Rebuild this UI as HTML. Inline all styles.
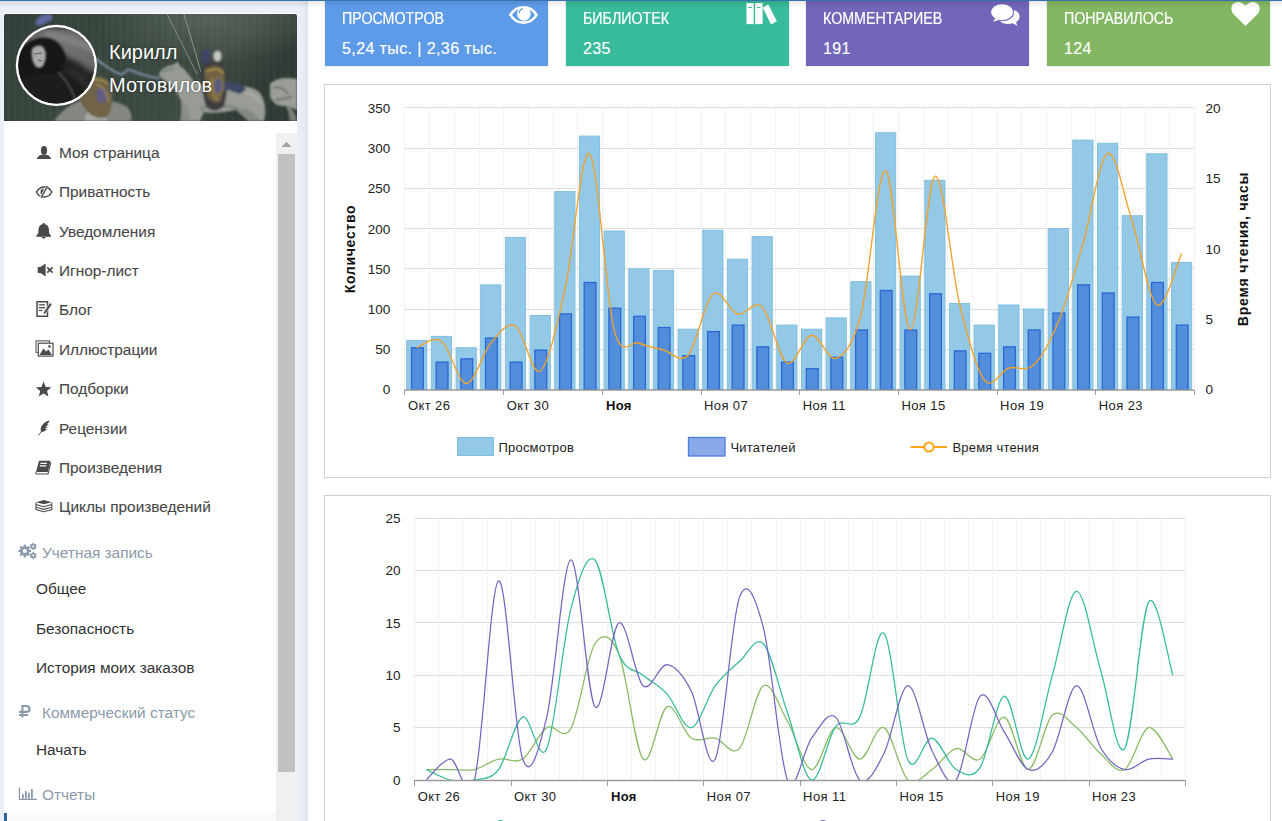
<!DOCTYPE html>
<html><head><meta charset="utf-8">
<style>
*{margin:0;padding:0;box-sizing:border-box}
html,body{width:1282px;height:821px;overflow:hidden;background:#fff;font-family:"Liberation Sans",sans-serif}
.a{position:absolute;white-space:nowrap}
#topline{position:absolute;left:0;top:0;width:1282px;height:1px;background:#3473ab;z-index:10}
#leftbg{position:absolute;left:0;top:0;width:308px;height:821px;background:#ebeff8}
#leftshadow{position:absolute;left:297px;top:0;width:11px;height:821px;background:linear-gradient(to right,#ebeff8 0%,#e7ebf4 60%,#dfe4ed 100%)}
#side{position:absolute;left:4px;top:13px;width:293px;height:808px;background:#fff;border-radius:4px 4px 0 0}
#hdr{position:absolute;left:4px;top:14px;width:293px;height:107px;border-radius:3px 3px 0 0;overflow:hidden;background:#36443b}
#sb{position:absolute;left:276px;top:133px;width:21px;height:688px;background:#f0f0f0}
#thumb{position:absolute;left:278px;top:154px;width:17px;height:618px;background:#c1c1c1}
.mi{position:absolute;left:59px;font-size:15.4px;color:#474747;line-height:20px;-webkit-text-stroke:0.1px #474747}
.si{position:absolute;left:36px;font-size:15.4px;color:#333;line-height:20px}
.sh{position:absolute;left:42px;font-size:15.4px;color:#8b9aab;line-height:20px}
.ic{position:absolute}
.card{position:absolute;top:1px;height:65px;color:#fff;box-shadow:0 0 1px rgba(0,0,0,.35)}
.card .t{position:absolute;left:17px;top:9px;-webkit-text-stroke:0.2px #fff;font-size:16px;line-height:18px;transform-origin:0 0;transform:scaleX(0.89)}
.card .v{position:absolute;left:17px;top:38px;-webkit-text-stroke:0.15px #fff;font-size:16px;line-height:20px;letter-spacing:0.4px}
.panel{position:absolute;left:324px;width:947px;border:1px solid #cfcfcf;background:#fff}
svg text{font-family:"Liberation Sans",sans-serif}
</style></head>
<body>
<div id="leftbg"></div>
<div id="leftshadow"></div>
<div id="side"></div>
<div id="hdr">
<svg width="293" height="107" viewBox="0 0 293 107">
<defs>
<linearGradient id="hg" x1="0" y1="0" x2="1" y2="0.3">
<stop offset="0" stop-color="#33413a"/><stop offset="0.45" stop-color="#3a4840"/><stop offset="0.8" stop-color="#3f4c44"/><stop offset="1" stop-color="#303c35"/>
</linearGradient>
<radialGradient id="hl" cx="0.7" cy="0.05" r="0.4">
<stop offset="0" stop-color="#6a756d" stop-opacity="0.55"/><stop offset="1" stop-color="#6a756d" stop-opacity="0"/>
</radialGradient>
<radialGradient id="avg" cx="0.6" cy="0.3" r="0.75">
<stop offset="0" stop-color="#7a7a7a"/><stop offset="0.45" stop-color="#3c3c3c"/><stop offset="1" stop-color="#161616"/>
</radialGradient>
<filter id="b1" x="-20%" y="-20%" width="140%" height="140%"><feGaussianBlur stdDeviation="1.2"/></filter>
<filter id="b2" x="-20%" y="-20%" width="140%" height="140%"><feGaussianBlur stdDeviation="2.5"/></filter>
<clipPath id="av"><circle cx="52.4" cy="51.4" r="38.1"/></clipPath>
<pattern id="streak" width="7" height="107" patternUnits="userSpaceOnUse">
<rect x="0" y="0" width="2" height="107" fill="#000" opacity="0.035"/><rect x="4" y="0" width="1" height="107" fill="#fff" opacity="0.02"/>
</pattern>
</defs>
<rect width="293" height="107" fill="url(#hg)"/>
<rect width="293" height="107" fill="url(#hl)"/>
<rect width="293" height="107" fill="url(#streak)"/>
<!-- lances -->
<line x1="163" y1="0" x2="193" y2="60" stroke="#8e948d" stroke-width="0.9"/>
<line x1="180" y1="0" x2="197" y2="58" stroke="#979c95" stroke-width="0.9"/>
<!-- ribbon -->
<path d="M90,44 C100,50 108,58 116,60 C122,62 120,54 126,56 C136,60 146,64 156,64" stroke="#8795b5" stroke-width="2.2" fill="none" filter="url(#b1)" opacity="0.9"/>
<!-- flag top -->
<path d="M31,10 C33,2 40,-1 47,0 L49,4 C46,8 40,10 35,12 Z" fill="#5b67a0" filter="url(#b1)"/>
<!-- horse under avatar -->
<g filter="url(#b1)">
<path d="M50,107 C56,98 66,90 78,86 C92,84 110,86 122,92 C128,98 128,104 127,107 Z" fill="#858882"/>
<path d="M84,96 C90,94 100,98 104,107 L80,107 Z" fill="#a6a9a4"/>
<path d="M72,70 C80,62 96,60 104,66 C110,74 110,92 104,102 C98,106 88,104 82,96 C76,88 72,80 72,70 Z" fill="#6f6446"/>
<path d="M76,70 C84,64 98,64 104,70" stroke="#a8924e" stroke-width="1.6" fill="none"/>
<ellipse cx="98" cy="81" rx="5.5" ry="8" fill="#5e5c80"/>
<path d="M92,70 C98,72 104,78 104,88" stroke="#b09a52" stroke-width="1.2" fill="none"/>
</g>
<!-- main horse -->
<g filter="url(#b1)">
<path d="M155,60 C156,56 162,52 168,51 L174,48 L176,52 C182,56 186,62 190,68 C200,72 214,70 230,72 C244,72 254,74 258,82 C262,90 262,100 260,107 L244,107 C240,100 236,96 232,96 C222,98 210,100 200,98 L196,107 L176,107 C178,98 178,90 176,84 C172,76 166,70 160,66 C157,64 155,62 155,60 Z" fill="#989b96"/>
<path d="M190,70 C200,76 212,78 226,76 C240,76 250,80 256,88" stroke="#b4b7b1" stroke-width="3" fill="none" opacity="0.6"/>
<path d="M196,96 C204,90 222,90 236,96" stroke="#70746e" stroke-width="3" fill="none" opacity="0.6"/>
<path d="M232,96 C240,92 250,96 256,107 L244,107 Z" fill="#858983"/>
<path d="M176,84 C182,88 186,96 186,107 L176,107 C178,98 178,90 176,84 Z" fill="#8a8e88"/>
<path d="M158,58 L170,54" stroke="#555a55" stroke-width="1" fill="none"/>
<path d="M197,38 C200,34 204,34 206,38 L206,50 L198,50 Z" fill="#3f4466"/>
<path d="M198,52 C204,46 216,44 220,52 C224,62 224,80 220,92 C214,98 206,98 202,92 C198,80 196,64 198,52 Z" fill="#3e3c40"/>
<path d="M200,56 C206,50 216,50 220,56 C222,66 220,80 216,88 C210,90 204,86 202,78 Z" fill="#6e6040"/>
<path d="M202,58 C208,54 216,54 219,60" stroke="#b49c56" stroke-width="1.5" fill="none"/>
<path d="M208,64 C206,72 208,82 214,86" stroke="#a89050" stroke-width="1.2" fill="none"/>
<ellipse cx="214" cy="72" rx="5" ry="8.5" fill="#5c5a7c" stroke="#9c8a4c" stroke-width="1"/>
<ellipse cx="213.5" cy="42" rx="4.2" ry="5.5" fill="#c4c6bf"/>
<path d="M220,68 C230,68 240,70 242,76 L236,80 C230,78 224,76 220,76 Z" fill="#3c4a66"/>
</g>
<!-- right horse -->
<g filter="url(#b1)">
<path d="M266,70 C272,64 282,63 293,65 L293,96 C288,94 284,92 280,92 C272,92 268,88 266,82 Z" fill="#9a9d98"/>
<path d="M284,92 C288,94 292,100 293,107 L286,107 C285,100 284,96 282,93 Z" fill="#7d817b"/>
<path d="M270,74 C274,72 280,74 284,80 M272,86 L288,83" stroke="#3d3f3c" stroke-width="1.1" fill="none"/>
</g>
<!-- avatar -->
<circle cx="52.4" cy="51.4" r="40.6" fill="#fff"/>
<g clip-path="url(#av)">
<rect x="10" y="10" width="85" height="85" fill="#242424"/>
<path d="M14,14 L95,14 L95,62 C86,52 76,44 62,40 C48,36 30,38 14,44 Z" fill="#6a6a6a" filter="url(#b2)"/>
<path d="M40,16 C56,18 74,22 90,34 L90,40 C74,32 56,28 40,24 Z" fill="#8c8c8c" opacity="0.7" filter="url(#b2)"/>
<path d="M60,32 C70,36 80,42 88,52 L88,60 C80,52 70,46 58,42 Z" fill="#7a7a7a" opacity="0.6" filter="url(#b2)"/>
<path d="M12,44 C16,30 30,22 44,24 C54,26 60,34 62,44 C60,54 54,62 50,70 L46,95 L12,95 Z" fill="#161616" filter="url(#b1)"/>
<path d="M28,35 C31,31 37,30 40,34 C43,39 42,47 39,52 C36,55 32,54 30,50 C28,46 27,40 28,35 Z" fill="#a9a9a9" filter="url(#b1)"/>
<path d="M30,40 L38,39 M34,46 L38,47" stroke="#444" stroke-width="0.8"/>
<path d="M14,66 C28,58 48,56 66,62 C80,68 90,80 94,95 L12,95 Z" fill="#1e1e1e" filter="url(#b2)"/>
<path d="M54,58 C62,66 70,78 74,94" stroke="#5a5a5a" stroke-width="2.2" fill="none" opacity="0.75" filter="url(#b1)"/>
<path d="M66,56 C76,62 84,72 88,84" stroke="#474747" stroke-width="3" fill="none" opacity="0.7" filter="url(#b2)"/>
<path d="M20,70 C26,78 30,86 34,95" stroke="#3a3a3a" stroke-width="3" fill="none" opacity="0.6" filter="url(#b2)"/>
</g>
</svg>
</div>
<div class="a" style="left:109px;top:39px;font-size:20px;line-height:26px;color:#fff;text-shadow:0 0 2px rgba(0,0,0,.6)">Кирилл</div>
<div class="a" style="left:109px;top:72px;font-size:20px;line-height:26px;color:#fff;text-shadow:0 0 2px rgba(0,0,0,.6)">Мотовилов</div>

<div id="sb"></div>
<div id="thumb"></div>
<svg class="a" style="left:276px;top:133px" width="21" height="21"><polygon points="5.5,14 10.5,8.8 15.5,14" fill="#a3a3a3"/></svg>

<div class="mi" style="top:143px">Моя страница</div>
<div class="mi" style="top:182px">Приватность</div>
<div class="mi" style="top:222px">Уведомления</div>
<div class="mi" style="top:261px">Игнор-лист</div>
<div class="mi" style="top:300px">Блог</div>
<div class="mi" style="top:340px">Иллюстрации</div>
<div class="mi" style="top:379px">Подборки</div>
<div class="mi" style="top:419px">Рецензии</div>
<div class="mi" style="top:458px">Произведения</div>
<div class="mi" style="top:497px">Циклы произведений</div>
<div class="sh" style="top:543px">Учетная запись</div>
<div class="si" style="top:579px">Общее</div>
<div class="si" style="top:619px">Безопасность</div>
<div class="si" style="top:658px">История моих заказов</div>
<div class="sh" style="top:703px">Коммерческий статус</div>
<div class="si" style="top:740px">Начать</div>
<div class="sh" style="top:785px">Отчеты</div>
<div class="a" style="left:4px;top:813px;width:272px;height:8px;background:#fafafa"></div>
<div class="a" style="left:4px;top:813px;width:3px;height:8px;background:#2a6496"></div>

<div class="card" style="left:325px;width:223px;background:#5d9be8"><div class="t">ПРОСМОТРОВ</div><div class="v">5,24 тыс. | 2,36 тыс.</div></div>
<div class="card" style="left:566px;width:223px;background:#38bb9b"><div class="t">БИБЛИОТЕК</div><div class="v">235</div></div>
<div class="card" style="left:806px;width:223px;background:#7266bb"><div class="t">КОММЕНТАРИЕВ</div><div class="v">191</div></div>
<div class="card" style="left:1047px;width:223px;background:#83b763"><div class="t">ПОНРАВИЛОСЬ</div><div class="v">124</div></div>

<div class="panel" style="top:84px;height:394px"></div>
<div class="panel" style="top:495px;height:340px"></div>

<svg id="charts" style="position:absolute;left:0;top:0" width="1282" height="821" viewBox="0 0 1282 821">
<line x1="404.5" y1="349.5" x2="1193.9" y2="349.5" stroke="#dedede" stroke-width="1"/>
<line x1="404.5" y1="309.5" x2="1193.9" y2="309.5" stroke="#dedede" stroke-width="1"/>
<line x1="404.5" y1="268.5" x2="1193.9" y2="268.5" stroke="#dedede" stroke-width="1"/>
<line x1="404.5" y1="228.5" x2="1193.9" y2="228.5" stroke="#dedede" stroke-width="1"/>
<line x1="404.5" y1="188.5" x2="1193.9" y2="188.5" stroke="#dedede" stroke-width="1"/>
<line x1="404.5" y1="148.5" x2="1193.9" y2="148.5" stroke="#dedede" stroke-width="1"/>
<line x1="404.5" y1="107.5" x2="1193.9" y2="107.5" stroke="#dedede" stroke-width="1"/>
<line x1="404.5" y1="107.9" x2="404.5" y2="389.5" stroke="#e6e6e6" stroke-width="1" stroke-dasharray="1,1"/>
<line x1="429.5" y1="107.9" x2="429.5" y2="389.5" stroke="#e6e6e6" stroke-width="1" stroke-dasharray="1,1"/>
<line x1="454.5" y1="107.9" x2="454.5" y2="389.5" stroke="#e6e6e6" stroke-width="1" stroke-dasharray="1,1"/>
<line x1="479.5" y1="107.9" x2="479.5" y2="389.5" stroke="#e6e6e6" stroke-width="1" stroke-dasharray="1,1"/>
<line x1="503.5" y1="107.9" x2="503.5" y2="389.5" stroke="#e6e6e6" stroke-width="1" stroke-dasharray="1,1"/>
<line x1="528.5" y1="107.9" x2="528.5" y2="389.5" stroke="#e6e6e6" stroke-width="1" stroke-dasharray="1,1"/>
<line x1="553.5" y1="107.9" x2="553.5" y2="389.5" stroke="#e6e6e6" stroke-width="1" stroke-dasharray="1,1"/>
<line x1="577.5" y1="107.9" x2="577.5" y2="389.5" stroke="#e6e6e6" stroke-width="1" stroke-dasharray="1,1"/>
<line x1="602.5" y1="107.9" x2="602.5" y2="389.5" stroke="#e6e6e6" stroke-width="1" stroke-dasharray="1,1"/>
<line x1="627.5" y1="107.9" x2="627.5" y2="389.5" stroke="#e6e6e6" stroke-width="1" stroke-dasharray="1,1"/>
<line x1="651.5" y1="107.9" x2="651.5" y2="389.5" stroke="#e6e6e6" stroke-width="1" stroke-dasharray="1,1"/>
<line x1="676.5" y1="107.9" x2="676.5" y2="389.5" stroke="#e6e6e6" stroke-width="1" stroke-dasharray="1,1"/>
<line x1="701.5" y1="107.9" x2="701.5" y2="389.5" stroke="#e6e6e6" stroke-width="1" stroke-dasharray="1,1"/>
<line x1="725.5" y1="107.9" x2="725.5" y2="389.5" stroke="#e6e6e6" stroke-width="1" stroke-dasharray="1,1"/>
<line x1="750.5" y1="107.9" x2="750.5" y2="389.5" stroke="#e6e6e6" stroke-width="1" stroke-dasharray="1,1"/>
<line x1="775.5" y1="107.9" x2="775.5" y2="389.5" stroke="#e6e6e6" stroke-width="1" stroke-dasharray="1,1"/>
<line x1="799.5" y1="107.9" x2="799.5" y2="389.5" stroke="#e6e6e6" stroke-width="1" stroke-dasharray="1,1"/>
<line x1="824.5" y1="107.9" x2="824.5" y2="389.5" stroke="#e6e6e6" stroke-width="1" stroke-dasharray="1,1"/>
<line x1="849.5" y1="107.9" x2="849.5" y2="389.5" stroke="#e6e6e6" stroke-width="1" stroke-dasharray="1,1"/>
<line x1="873.5" y1="107.9" x2="873.5" y2="389.5" stroke="#e6e6e6" stroke-width="1" stroke-dasharray="1,1"/>
<line x1="898.5" y1="107.9" x2="898.5" y2="389.5" stroke="#e6e6e6" stroke-width="1" stroke-dasharray="1,1"/>
<line x1="923.5" y1="107.9" x2="923.5" y2="389.5" stroke="#e6e6e6" stroke-width="1" stroke-dasharray="1,1"/>
<line x1="947.5" y1="107.9" x2="947.5" y2="389.5" stroke="#e6e6e6" stroke-width="1" stroke-dasharray="1,1"/>
<line x1="972.5" y1="107.9" x2="972.5" y2="389.5" stroke="#e6e6e6" stroke-width="1" stroke-dasharray="1,1"/>
<line x1="997.5" y1="107.9" x2="997.5" y2="389.5" stroke="#e6e6e6" stroke-width="1" stroke-dasharray="1,1"/>
<line x1="1021.5" y1="107.9" x2="1021.5" y2="389.5" stroke="#e6e6e6" stroke-width="1" stroke-dasharray="1,1"/>
<line x1="1046.5" y1="107.9" x2="1046.5" y2="389.5" stroke="#e6e6e6" stroke-width="1" stroke-dasharray="1,1"/>
<line x1="1071.5" y1="107.9" x2="1071.5" y2="389.5" stroke="#e6e6e6" stroke-width="1" stroke-dasharray="1,1"/>
<line x1="1095.5" y1="107.9" x2="1095.5" y2="389.5" stroke="#e6e6e6" stroke-width="1" stroke-dasharray="1,1"/>
<line x1="1120.5" y1="107.9" x2="1120.5" y2="389.5" stroke="#e6e6e6" stroke-width="1" stroke-dasharray="1,1"/>
<line x1="1145.5" y1="107.9" x2="1145.5" y2="389.5" stroke="#e6e6e6" stroke-width="1" stroke-dasharray="1,1"/>
<line x1="1169.5" y1="107.9" x2="1169.5" y2="389.5" stroke="#e6e6e6" stroke-width="1" stroke-dasharray="1,1"/>
<line x1="1194.5" y1="107.9" x2="1194.5" y2="389.5" stroke="#e6e6e6" stroke-width="1" stroke-dasharray="1,1"/>
<rect x="406.7" y="340.4" width="20.2" height="49.1" fill="#93c9e6" stroke="#80bee0" stroke-width="1"/>
<rect x="431.4" y="336.4" width="20.2" height="53.1" fill="#93c9e6" stroke="#80bee0" stroke-width="1"/>
<rect x="456.1" y="347.7" width="20.2" height="41.8" fill="#93c9e6" stroke="#80bee0" stroke-width="1"/>
<rect x="480.7" y="284.9" width="20.2" height="104.6" fill="#93c9e6" stroke="#80bee0" stroke-width="1"/>
<rect x="505.4" y="237.4" width="20.2" height="152.1" fill="#93c9e6" stroke="#80bee0" stroke-width="1"/>
<rect x="530.1" y="315.5" width="20.2" height="74.0" fill="#93c9e6" stroke="#80bee0" stroke-width="1"/>
<rect x="554.8" y="191.6" width="20.2" height="197.9" fill="#93c9e6" stroke="#80bee0" stroke-width="1"/>
<rect x="579.4" y="136.1" width="20.2" height="253.4" fill="#93c9e6" stroke="#80bee0" stroke-width="1"/>
<rect x="604.1" y="231.0" width="20.2" height="158.5" fill="#93c9e6" stroke="#80bee0" stroke-width="1"/>
<rect x="628.8" y="268.8" width="20.2" height="120.7" fill="#93c9e6" stroke="#80bee0" stroke-width="1"/>
<rect x="653.4" y="270.4" width="20.2" height="119.1" fill="#93c9e6" stroke="#80bee0" stroke-width="1"/>
<rect x="678.1" y="329.2" width="20.2" height="60.3" fill="#93c9e6" stroke="#80bee0" stroke-width="1"/>
<rect x="702.8" y="230.2" width="20.2" height="159.3" fill="#93c9e6" stroke="#80bee0" stroke-width="1"/>
<rect x="727.4" y="259.2" width="20.2" height="130.3" fill="#93c9e6" stroke="#80bee0" stroke-width="1"/>
<rect x="752.1" y="236.6" width="20.2" height="152.9" fill="#93c9e6" stroke="#80bee0" stroke-width="1"/>
<rect x="776.8" y="325.1" width="20.2" height="64.4" fill="#93c9e6" stroke="#80bee0" stroke-width="1"/>
<rect x="801.5" y="329.2" width="20.2" height="60.3" fill="#93c9e6" stroke="#80bee0" stroke-width="1"/>
<rect x="826.1" y="317.9" width="20.2" height="71.6" fill="#93c9e6" stroke="#80bee0" stroke-width="1"/>
<rect x="850.8" y="281.7" width="20.2" height="107.8" fill="#93c9e6" stroke="#80bee0" stroke-width="1"/>
<rect x="875.5" y="132.8" width="20.2" height="256.7" fill="#93c9e6" stroke="#80bee0" stroke-width="1"/>
<rect x="900.1" y="276.1" width="20.2" height="113.4" fill="#93c9e6" stroke="#80bee0" stroke-width="1"/>
<rect x="924.8" y="180.3" width="20.2" height="209.2" fill="#93c9e6" stroke="#80bee0" stroke-width="1"/>
<rect x="949.5" y="303.4" width="20.2" height="86.1" fill="#93c9e6" stroke="#80bee0" stroke-width="1"/>
<rect x="974.1" y="325.1" width="20.2" height="64.4" fill="#93c9e6" stroke="#80bee0" stroke-width="1"/>
<rect x="998.8" y="305.0" width="20.2" height="84.5" fill="#93c9e6" stroke="#80bee0" stroke-width="1"/>
<rect x="1023.5" y="309.0" width="20.2" height="80.5" fill="#93c9e6" stroke="#80bee0" stroke-width="1"/>
<rect x="1048.2" y="228.6" width="20.2" height="160.9" fill="#93c9e6" stroke="#80bee0" stroke-width="1"/>
<rect x="1072.8" y="140.1" width="20.2" height="249.4" fill="#93c9e6" stroke="#80bee0" stroke-width="1"/>
<rect x="1097.5" y="143.3" width="20.2" height="246.2" fill="#93c9e6" stroke="#80bee0" stroke-width="1"/>
<rect x="1122.2" y="215.7" width="20.2" height="173.8" fill="#93c9e6" stroke="#80bee0" stroke-width="1"/>
<rect x="1146.8" y="153.8" width="20.2" height="235.7" fill="#93c9e6" stroke="#80bee0" stroke-width="1"/>
<rect x="1171.5" y="262.4" width="20.2" height="127.1" fill="#93c9e6" stroke="#80bee0" stroke-width="1"/>
<rect x="411.5" y="347.7" width="11.8" height="41.8" fill="#528edb" stroke="#2a68d4" stroke-width="1.3"/>
<rect x="436.2" y="362.1" width="11.8" height="27.4" fill="#528edb" stroke="#2a68d4" stroke-width="1.3"/>
<rect x="460.9" y="358.9" width="11.8" height="30.6" fill="#528edb" stroke="#2a68d4" stroke-width="1.3"/>
<rect x="485.5" y="338.0" width="11.8" height="51.5" fill="#528edb" stroke="#2a68d4" stroke-width="1.3"/>
<rect x="510.2" y="362.1" width="11.8" height="27.4" fill="#528edb" stroke="#2a68d4" stroke-width="1.3"/>
<rect x="534.9" y="350.1" width="11.8" height="39.4" fill="#528edb" stroke="#2a68d4" stroke-width="1.3"/>
<rect x="559.6" y="313.9" width="11.8" height="75.6" fill="#528edb" stroke="#2a68d4" stroke-width="1.3"/>
<rect x="584.2" y="282.5" width="11.8" height="107.0" fill="#528edb" stroke="#2a68d4" stroke-width="1.3"/>
<rect x="608.9" y="308.2" width="11.8" height="81.3" fill="#528edb" stroke="#2a68d4" stroke-width="1.3"/>
<rect x="633.6" y="316.3" width="11.8" height="73.2" fill="#528edb" stroke="#2a68d4" stroke-width="1.3"/>
<rect x="658.2" y="327.5" width="11.8" height="62.0" fill="#528edb" stroke="#2a68d4" stroke-width="1.3"/>
<rect x="682.9" y="355.7" width="11.8" height="33.8" fill="#528edb" stroke="#2a68d4" stroke-width="1.3"/>
<rect x="707.6" y="331.6" width="11.8" height="57.9" fill="#528edb" stroke="#2a68d4" stroke-width="1.3"/>
<rect x="732.2" y="325.1" width="11.8" height="64.4" fill="#528edb" stroke="#2a68d4" stroke-width="1.3"/>
<rect x="756.9" y="346.9" width="11.8" height="42.6" fill="#528edb" stroke="#2a68d4" stroke-width="1.3"/>
<rect x="781.6" y="362.1" width="11.8" height="27.4" fill="#528edb" stroke="#2a68d4" stroke-width="1.3"/>
<rect x="806.3" y="368.6" width="11.8" height="20.9" fill="#528edb" stroke="#2a68d4" stroke-width="1.3"/>
<rect x="830.9" y="357.3" width="11.8" height="32.2" fill="#528edb" stroke="#2a68d4" stroke-width="1.3"/>
<rect x="855.6" y="330.0" width="11.8" height="59.5" fill="#528edb" stroke="#2a68d4" stroke-width="1.3"/>
<rect x="880.3" y="290.5" width="11.8" height="99.0" fill="#528edb" stroke="#2a68d4" stroke-width="1.3"/>
<rect x="904.9" y="330.0" width="11.8" height="59.5" fill="#528edb" stroke="#2a68d4" stroke-width="1.3"/>
<rect x="929.6" y="293.8" width="11.8" height="95.7" fill="#528edb" stroke="#2a68d4" stroke-width="1.3"/>
<rect x="954.3" y="350.9" width="11.8" height="38.6" fill="#528edb" stroke="#2a68d4" stroke-width="1.3"/>
<rect x="978.9" y="353.3" width="11.8" height="36.2" fill="#528edb" stroke="#2a68d4" stroke-width="1.3"/>
<rect x="1003.6" y="346.9" width="11.8" height="42.6" fill="#528edb" stroke="#2a68d4" stroke-width="1.3"/>
<rect x="1028.3" y="330.0" width="11.8" height="59.5" fill="#528edb" stroke="#2a68d4" stroke-width="1.3"/>
<rect x="1053.0" y="313.1" width="11.8" height="76.4" fill="#528edb" stroke="#2a68d4" stroke-width="1.3"/>
<rect x="1077.6" y="284.9" width="11.8" height="104.6" fill="#528edb" stroke="#2a68d4" stroke-width="1.3"/>
<rect x="1102.3" y="293.0" width="11.8" height="96.5" fill="#528edb" stroke="#2a68d4" stroke-width="1.3"/>
<rect x="1127.0" y="317.1" width="11.8" height="72.4" fill="#528edb" stroke="#2a68d4" stroke-width="1.3"/>
<rect x="1151.6" y="282.5" width="11.8" height="107.0" fill="#528edb" stroke="#2a68d4" stroke-width="1.3"/>
<rect x="1176.3" y="325.1" width="11.8" height="64.4" fill="#528edb" stroke="#2a68d4" stroke-width="1.3"/>
<path d="M416.83,347.70 C420.95,346.58 433.28,335.03 441.50,341.00 C449.73,346.97 457.95,383.17 466.18,383.50 C474.40,383.83 482.62,352.58 490.85,343.00 C499.07,333.42 507.29,321.33 515.51,326.00 C523.74,330.67 531.96,377.00 540.18,371.00 C548.41,365.00 556.63,326.22 564.86,290.00 C573.08,253.78 581.30,147.03 589.52,153.70 C597.75,160.37 605.97,298.45 614.20,330.00 C622.42,361.55 630.64,339.67 638.87,343.00 C647.09,346.33 655.31,348.00 663.54,350.00 C671.76,352.00 679.98,364.33 688.21,355.00 C696.43,345.67 704.65,300.83 712.88,294.00 C721.10,287.17 729.32,311.83 737.55,314.00 C745.77,316.17 753.99,298.83 762.22,307.00 C770.44,315.17 778.66,358.28 786.88,363.00 C795.11,367.72 803.33,336.08 811.56,335.30 C819.78,334.52 828.00,361.68 836.23,358.30 C844.45,354.92 852.67,346.27 860.89,315.00 C869.12,283.73 877.34,168.25 885.57,170.70 C893.79,173.15 902.01,328.77 910.24,329.70 C918.46,330.63 926.68,180.58 934.91,176.30 C943.13,172.02 951.35,270.05 959.58,304.00 C967.80,337.95 976.02,369.33 984.25,380.00 C992.47,390.67 1000.69,370.50 1008.92,368.00 C1017.14,365.50 1025.36,372.67 1033.59,365.00 C1041.81,357.33 1050.03,342.17 1058.26,322.00 C1066.48,301.83 1074.70,272.10 1082.93,244.00 C1091.15,215.90 1099.37,157.07 1107.60,153.40 C1115.82,149.73 1124.04,196.73 1132.27,222.00 C1140.49,247.27 1148.71,299.77 1156.93,305.00 C1165.16,310.23 1177.49,262.00 1181.61,253.40" fill="none" stroke="#f2a12b" stroke-width="1.35"/>
<line x1="404.5" y1="390" x2="1193.9" y2="390" stroke="#9a9a9a" stroke-width="1.5"/>
<line x1="404.5" y1="390" x2="404.5" y2="395" stroke="#9a9a9a" stroke-width="1"/>
<line x1="503.5" y1="390" x2="503.5" y2="395" stroke="#9a9a9a" stroke-width="1"/>
<line x1="602.5" y1="390" x2="602.5" y2="395" stroke="#9a9a9a" stroke-width="1"/>
<line x1="701.5" y1="390" x2="701.5" y2="395" stroke="#9a9a9a" stroke-width="1"/>
<line x1="799.5" y1="390" x2="799.5" y2="395" stroke="#9a9a9a" stroke-width="1"/>
<line x1="898.5" y1="390" x2="898.5" y2="395" stroke="#9a9a9a" stroke-width="1"/>
<line x1="997.5" y1="390" x2="997.5" y2="395" stroke="#9a9a9a" stroke-width="1"/>
<line x1="1095.5" y1="390" x2="1095.5" y2="395" stroke="#9a9a9a" stroke-width="1"/>
<line x1="1194.5" y1="390" x2="1194.5" y2="395" stroke="#9a9a9a" stroke-width="1"/>
<text x="390.2" y="394.4" text-anchor="end" font-size="13.5" fill="#222">0</text>
<text x="390.2" y="354.2" text-anchor="end" font-size="13.5" fill="#222">50</text>
<text x="390.2" y="313.9" text-anchor="end" font-size="13.5" fill="#222">100</text>
<text x="390.2" y="273.7" text-anchor="end" font-size="13.5" fill="#222">150</text>
<text x="390.2" y="233.5" text-anchor="end" font-size="13.5" fill="#222">200</text>
<text x="390.2" y="193.3" text-anchor="end" font-size="13.5" fill="#222">250</text>
<text x="390.2" y="153.0" text-anchor="end" font-size="13.5" fill="#222">300</text>
<text x="390.2" y="112.8" text-anchor="end" font-size="13.5" fill="#222">350</text>
<text x="1205.5" y="394.4" font-size="13.5" fill="#222">0</text>
<text x="1205.5" y="324.0" font-size="13.5" fill="#222">5</text>
<text x="1205.5" y="253.6" font-size="13.5" fill="#222">10</text>
<text x="1205.5" y="183.2" font-size="13.5" fill="#222">15</text>
<text x="1205.5" y="112.8" font-size="13.5" fill="#222">20</text>
<text transform="translate(355,249) rotate(-90)" text-anchor="middle" font-size="14" font-weight="bold" letter-spacing="0.7" fill="#111">Количество</text>
<text transform="translate(1248,249) rotate(-90)" text-anchor="middle" font-size="14" font-weight="bold" letter-spacing="0.8" fill="#111">Время чтения, часы</text>
<text x="408.0" y="410" font-size="13" letter-spacing="0.4" fill="#222">Окт 26</text>
<text x="506.7" y="410" font-size="13" letter-spacing="0.4" fill="#222">Окт 30</text>
<text x="605.9" y="410" font-size="13" font-weight="bold" letter-spacing="0.4" fill="#111">Ноя</text>
<text x="704.0" y="410" font-size="13" letter-spacing="0.4" fill="#222">Ноя 07</text>
<text x="802.7" y="410" font-size="13" letter-spacing="0.4" fill="#222">Ноя 11</text>
<text x="901.4" y="410" font-size="13" letter-spacing="0.4" fill="#222">Ноя 15</text>
<text x="1000.1" y="410" font-size="13" letter-spacing="0.4" fill="#222">Ноя 19</text>
<text x="1098.8" y="410" font-size="13" letter-spacing="0.4" fill="#222">Ноя 23</text>
<rect x="457.5" y="437.5" width="36" height="18" fill="#93c9e6" stroke="#80bee0" stroke-width="1"/>
<text x="498.5" y="452" font-size="13" letter-spacing="0.2" fill="#222">Просмотров</text>
<rect x="688.5" y="437.5" width="36.5" height="18.5" fill="#8aa9e8" stroke="#4a7fe0" stroke-width="1.3"/>
<text x="730.5" y="452" font-size="13" letter-spacing="0.2" fill="#222">Читателей</text>
<line x1="910.5" y1="447" x2="947" y2="447" stroke="#ffa516" stroke-width="2"/>
<circle cx="929" cy="447" r="4.6" fill="#fff" stroke="#ffa516" stroke-width="2"/>
<text x="952.5" y="451.5" font-size="13" letter-spacing="0.2" fill="#222">Время чтения</text>
<line x1="414.3" y1="727.5" x2="1184.9" y2="727.5" stroke="#dedede" stroke-width="1"/>
<line x1="414.3" y1="675.5" x2="1184.9" y2="675.5" stroke="#dedede" stroke-width="1"/>
<line x1="414.3" y1="622.5" x2="1184.9" y2="622.5" stroke="#dedede" stroke-width="1"/>
<line x1="414.3" y1="570.5" x2="1184.9" y2="570.5" stroke="#dedede" stroke-width="1"/>
<line x1="414.3" y1="518.5" x2="1184.9" y2="518.5" stroke="#dedede" stroke-width="1"/>
<line x1="414.5" y1="518" x2="414.5" y2="780" stroke="#e6e6e6" stroke-width="1" stroke-dasharray="1,1"/>
<line x1="438.5" y1="518" x2="438.5" y2="780" stroke="#e6e6e6" stroke-width="1" stroke-dasharray="1,1"/>
<line x1="462.5" y1="518" x2="462.5" y2="780" stroke="#e6e6e6" stroke-width="1" stroke-dasharray="1,1"/>
<line x1="487.5" y1="518" x2="487.5" y2="780" stroke="#e6e6e6" stroke-width="1" stroke-dasharray="1,1"/>
<line x1="511.5" y1="518" x2="511.5" y2="780" stroke="#e6e6e6" stroke-width="1" stroke-dasharray="1,1"/>
<line x1="535.5" y1="518" x2="535.5" y2="780" stroke="#e6e6e6" stroke-width="1" stroke-dasharray="1,1"/>
<line x1="559.5" y1="518" x2="559.5" y2="780" stroke="#e6e6e6" stroke-width="1" stroke-dasharray="1,1"/>
<line x1="583.5" y1="518" x2="583.5" y2="780" stroke="#e6e6e6" stroke-width="1" stroke-dasharray="1,1"/>
<line x1="607.5" y1="518" x2="607.5" y2="780" stroke="#e6e6e6" stroke-width="1" stroke-dasharray="1,1"/>
<line x1="631.5" y1="518" x2="631.5" y2="780" stroke="#e6e6e6" stroke-width="1" stroke-dasharray="1,1"/>
<line x1="655.5" y1="518" x2="655.5" y2="780" stroke="#e6e6e6" stroke-width="1" stroke-dasharray="1,1"/>
<line x1="679.5" y1="518" x2="679.5" y2="780" stroke="#e6e6e6" stroke-width="1" stroke-dasharray="1,1"/>
<line x1="703.5" y1="518" x2="703.5" y2="780" stroke="#e6e6e6" stroke-width="1" stroke-dasharray="1,1"/>
<line x1="727.5" y1="518" x2="727.5" y2="780" stroke="#e6e6e6" stroke-width="1" stroke-dasharray="1,1"/>
<line x1="751.5" y1="518" x2="751.5" y2="780" stroke="#e6e6e6" stroke-width="1" stroke-dasharray="1,1"/>
<line x1="776.5" y1="518" x2="776.5" y2="780" stroke="#e6e6e6" stroke-width="1" stroke-dasharray="1,1"/>
<line x1="800.5" y1="518" x2="800.5" y2="780" stroke="#e6e6e6" stroke-width="1" stroke-dasharray="1,1"/>
<line x1="824.5" y1="518" x2="824.5" y2="780" stroke="#e6e6e6" stroke-width="1" stroke-dasharray="1,1"/>
<line x1="848.5" y1="518" x2="848.5" y2="780" stroke="#e6e6e6" stroke-width="1" stroke-dasharray="1,1"/>
<line x1="872.5" y1="518" x2="872.5" y2="780" stroke="#e6e6e6" stroke-width="1" stroke-dasharray="1,1"/>
<line x1="896.5" y1="518" x2="896.5" y2="780" stroke="#e6e6e6" stroke-width="1" stroke-dasharray="1,1"/>
<line x1="920.5" y1="518" x2="920.5" y2="780" stroke="#e6e6e6" stroke-width="1" stroke-dasharray="1,1"/>
<line x1="944.5" y1="518" x2="944.5" y2="780" stroke="#e6e6e6" stroke-width="1" stroke-dasharray="1,1"/>
<line x1="968.5" y1="518" x2="968.5" y2="780" stroke="#e6e6e6" stroke-width="1" stroke-dasharray="1,1"/>
<line x1="992.5" y1="518" x2="992.5" y2="780" stroke="#e6e6e6" stroke-width="1" stroke-dasharray="1,1"/>
<line x1="1016.5" y1="518" x2="1016.5" y2="780" stroke="#e6e6e6" stroke-width="1" stroke-dasharray="1,1"/>
<line x1="1040.5" y1="518" x2="1040.5" y2="780" stroke="#e6e6e6" stroke-width="1" stroke-dasharray="1,1"/>
<line x1="1064.5" y1="518" x2="1064.5" y2="780" stroke="#e6e6e6" stroke-width="1" stroke-dasharray="1,1"/>
<line x1="1089.5" y1="518" x2="1089.5" y2="780" stroke="#e6e6e6" stroke-width="1" stroke-dasharray="1,1"/>
<line x1="1113.5" y1="518" x2="1113.5" y2="780" stroke="#e6e6e6" stroke-width="1" stroke-dasharray="1,1"/>
<line x1="1137.5" y1="518" x2="1137.5" y2="780" stroke="#e6e6e6" stroke-width="1" stroke-dasharray="1,1"/>
<line x1="1161.5" y1="518" x2="1161.5" y2="780" stroke="#e6e6e6" stroke-width="1" stroke-dasharray="1,1"/>
<line x1="1185.5" y1="518" x2="1185.5" y2="780" stroke="#e6e6e6" stroke-width="1" stroke-dasharray="1,1"/>
<clipPath id="c2"><rect x="414.3" y="500" width="770.6" height="280"/></clipPath>
<path d="M426.34,769.52 C430.35,769.52 442.39,769.52 450.42,769.52 C458.45,769.52 466.47,771.27 474.50,769.52 C482.53,767.77 490.55,760.79 498.58,759.04 C506.61,757.29 514.63,764.28 522.66,759.04 C530.69,753.80 538.71,732.67 546.74,727.60 C554.77,722.53 562.79,742.62 570.82,728.65 C578.85,714.67 586.87,656.16 594.90,643.76 C602.93,631.36 610.95,635.03 618.98,654.24 C627.01,673.45 635.03,750.31 643.06,759.04 C651.09,767.77 659.11,710.13 667.14,706.64 C675.17,703.15 683.19,732.84 691.22,738.08 C699.25,743.32 707.27,736.33 715.30,738.08 C723.33,739.83 731.35,757.29 739.38,748.56 C747.41,739.83 755.43,690.22 763.46,685.68 C771.49,681.14 779.51,707.34 787.54,721.31 C795.57,735.29 803.59,768.47 811.62,769.52 C819.65,770.57 827.67,729.35 835.70,727.60 C843.73,725.85 851.75,759.04 859.78,759.04 C867.81,759.04 875.83,724.11 883.86,727.60 C891.89,731.09 899.91,773.01 907.94,780.00 C915.97,786.99 923.99,774.76 932.02,769.52 C940.05,764.28 948.07,750.31 956.10,748.56 C964.13,746.81 972.15,764.28 980.18,759.04 C988.21,753.80 996.23,715.37 1004.26,717.12 C1012.29,718.87 1020.31,769.87 1028.34,769.52 C1036.37,769.17 1044.39,722.01 1052.42,715.02 C1060.45,708.04 1068.47,721.14 1076.50,727.60 C1084.53,734.06 1092.55,746.81 1100.58,753.80 C1108.61,760.79 1116.63,773.89 1124.66,769.52 C1132.69,765.15 1140.71,729.35 1148.74,727.60 C1156.77,725.85 1168.81,753.80 1172.82,759.04" fill="none" stroke="#86bb63" stroke-width="1.25" clip-path="url(#c2)"/>
<path d="M426.34,769.52 C430.35,771.27 442.39,778.25 450.42,780.00 C458.45,781.75 466.47,781.75 474.50,780.00 C482.53,778.25 490.55,780.00 498.58,769.52 C506.61,759.04 514.63,720.61 522.66,717.12 C530.69,713.63 538.71,766.55 546.74,748.56 C554.77,730.57 562.79,640.62 570.82,609.18 C578.85,577.74 586.87,552.41 594.90,559.92 C602.93,567.43 610.95,635.03 618.98,654.24 C627.01,673.45 635.03,668.56 643.06,675.20 C651.09,681.84 659.11,685.33 667.14,694.06 C675.17,702.80 683.19,729.00 691.22,727.60 C699.25,726.20 707.27,696.68 715.30,685.68 C723.33,674.68 731.35,668.56 739.38,661.58 C747.41,654.59 755.43,635.20 763.46,643.76 C771.49,652.32 779.51,690.22 787.54,712.93 C795.57,735.63 803.59,777.73 811.62,780.00 C819.65,782.27 827.67,737.03 835.70,726.55 C843.73,716.07 851.75,732.67 859.78,717.12 C867.81,701.57 875.83,626.12 883.86,633.28 C891.89,640.44 899.91,742.62 907.94,760.09 C915.97,777.55 923.99,736.51 932.02,738.08 C940.05,739.65 948.07,764.63 956.10,769.52 C964.13,774.41 972.15,779.65 980.18,767.42 C988.21,755.20 996.23,697.56 1004.26,696.16 C1012.29,694.76 1020.31,762.53 1028.34,759.04 C1036.37,755.55 1044.39,703.15 1052.42,675.20 C1060.45,647.25 1068.47,592.23 1076.50,591.36 C1084.53,590.49 1092.55,643.76 1100.58,669.96 C1108.61,696.16 1116.63,759.91 1124.66,748.56 C1132.69,737.21 1140.71,614.07 1148.74,601.84 C1156.77,589.61 1168.81,662.97 1172.82,675.20" fill="none" stroke="#35bb9b" stroke-width="1.25" clip-path="url(#c2)"/>
<path d="M426.34,780.00 C430.35,776.51 442.39,759.04 450.42,759.04 C458.45,759.04 466.47,809.69 474.50,780.00 C482.53,750.31 490.55,584.37 498.58,580.88 C506.61,577.39 514.63,736.33 522.66,759.04 C530.69,781.75 538.71,750.31 546.74,717.12 C554.77,683.93 562.79,561.67 570.82,559.92 C578.85,558.17 586.87,696.16 594.90,706.64 C602.93,717.12 610.95,626.29 618.98,622.80 C627.01,619.31 635.03,678.69 643.06,685.68 C651.09,692.67 659.11,663.85 667.14,664.72 C675.17,665.59 683.19,675.20 691.22,690.92 C699.25,706.64 707.27,774.59 715.30,759.04 C723.33,743.49 731.35,619.48 739.38,597.65 C747.41,575.81 755.43,597.65 763.46,628.04 C771.49,658.43 779.51,761.66 787.54,780.00 C795.57,798.34 803.59,748.56 811.62,738.08 C819.65,727.60 827.67,710.13 835.70,717.12 C843.73,724.11 851.75,773.89 859.78,780.00 C867.81,786.11 875.83,769.52 883.86,753.80 C891.89,738.08 899.91,686.20 907.94,685.68 C915.97,685.16 923.99,734.94 932.02,750.66 C940.05,766.38 948.07,789.08 956.10,780.00 C964.13,770.92 972.15,704.19 980.18,696.16 C988.21,688.13 996.23,719.57 1004.26,731.79 C1012.29,744.02 1020.31,766.20 1028.34,769.52 C1036.37,772.84 1044.39,765.68 1052.42,751.70 C1060.45,737.73 1068.47,686.38 1076.50,685.68 C1084.53,684.98 1092.55,733.54 1100.58,747.51 C1108.61,761.49 1116.63,767.60 1124.66,769.52 C1132.69,771.44 1140.71,760.79 1148.74,759.04 C1156.77,757.29 1168.81,759.04 1172.82,759.04" fill="none" stroke="#7465c0" stroke-width="1.25" clip-path="url(#c2)"/>
<line x1="414.3" y1="780.5" x2="1184.9" y2="780.5" stroke="#9a9a9a" stroke-width="1.5"/>
<line x1="414.5" y1="780" x2="414.5" y2="786" stroke="#9a9a9a" stroke-width="1"/>
<line x1="511.5" y1="780" x2="511.5" y2="786" stroke="#9a9a9a" stroke-width="1"/>
<line x1="607.5" y1="780" x2="607.5" y2="786" stroke="#9a9a9a" stroke-width="1"/>
<line x1="703.5" y1="780" x2="703.5" y2="786" stroke="#9a9a9a" stroke-width="1"/>
<line x1="800.5" y1="780" x2="800.5" y2="786" stroke="#9a9a9a" stroke-width="1"/>
<line x1="896.5" y1="780" x2="896.5" y2="786" stroke="#9a9a9a" stroke-width="1"/>
<line x1="992.5" y1="780" x2="992.5" y2="786" stroke="#9a9a9a" stroke-width="1"/>
<line x1="1089.5" y1="780" x2="1089.5" y2="786" stroke="#9a9a9a" stroke-width="1"/>
<line x1="1185.5" y1="780" x2="1185.5" y2="786" stroke="#9a9a9a" stroke-width="1"/>
<text x="400.5" y="784.8" text-anchor="end" font-size="13.5" fill="#222">0</text>
<text x="400.5" y="732.4" text-anchor="end" font-size="13.5" fill="#222">5</text>
<text x="400.5" y="680.0" text-anchor="end" font-size="13.5" fill="#222">10</text>
<text x="400.5" y="627.6" text-anchor="end" font-size="13.5" fill="#222">15</text>
<text x="400.5" y="575.2" text-anchor="end" font-size="13.5" fill="#222">20</text>
<text x="400.5" y="522.8" text-anchor="end" font-size="13.5" fill="#222">25</text>
<text x="417.8" y="801" font-size="13" letter-spacing="0.4" fill="#222">Окт 26</text>
<text x="514.1" y="801" font-size="13" letter-spacing="0.4" fill="#222">Окт 30</text>
<text x="610.9" y="801" font-size="13" font-weight="bold" letter-spacing="0.4" fill="#111">Ноя</text>
<text x="706.8" y="801" font-size="13" letter-spacing="0.4" fill="#222">Ноя 07</text>
<text x="803.1" y="801" font-size="13" letter-spacing="0.4" fill="#222">Ноя 11</text>
<text x="899.4" y="801" font-size="13" letter-spacing="0.4" fill="#222">Ноя 15</text>
<text x="995.7" y="801" font-size="13" letter-spacing="0.4" fill="#222">Ноя 19</text>
<text x="1092.0" y="801" font-size="13" letter-spacing="0.4" fill="#222">Ноя 23</text>
<circle cx="500.5" cy="826" r="5" fill="#fff" stroke="#35bb9b" stroke-width="2"/>
<circle cx="823" cy="826" r="5" fill="#fff" stroke="#7465c0" stroke-width="2"/>
</svg>
<svg id="icons" style="position:absolute;left:0;top:0" width="1282" height="821" viewBox="0 0 1282 821">
<ellipse cx="44" cy="150.4" rx="3.1" ry="4.3" fill="#4a4a4a"/>
<path d="M36.7,159 C37.5,156 40,154.6 42.5,154.4 L45.5,154.4 C48,154.6 50.5,156 51.2,159 Z" fill="#4a4a4a"/>
<path d="M36.5,192 C39,188.2 42,187 44,187 C47,187 50,188.5 51.8,192 C50,195.5 47,197 44,197 C41,197 38,195.5 36.5,192 Z" fill="none" stroke="#4a4a4a" stroke-width="1.5"/>
<path d="M40.5,192 C40.5,189.5 42,188.5 44,188.5 L41.5,195.5 C41,194.5 40.5,193.5 40.5,192 Z" fill="#4a4a4a"/>
<line x1="47.5" y1="186" x2="40.5" y2="197.8" stroke="#fff" stroke-width="2.2"/>
<line x1="47.5" y1="186.2" x2="41" y2="197.6" stroke="#4a4a4a" stroke-width="1.4"/>
<path d="M43.7,223 C44.5,223 45,223.6 45,224.3 C48,225 49,227.5 49,230.5 C49,233 49.6,234.5 51.2,236 L51.2,236.8 L36.2,236.8 L36.2,236 C37.8,234.5 38.4,233 38.4,230.5 C38.4,227.5 39.4,225 42.4,224.3 C42.4,223.6 43,223 43.7,223 Z" fill="#4a4a4a"/>
<path d="M41.8,237 C42,238 42.8,238.6 43.7,238.6 C44.6,238.6 45.4,238 45.6,237 Z" fill="#4a4a4a"/>
<path d="M37.7,267 L40.5,267 L45.6,263.5 L45.6,276.5 L40.5,273 L37.7,273 Z" fill="#4a4a4a"/>
<path d="M47.2,267.4 L52.6,272.6 M52.6,267.4 L47.2,272.6" stroke="#4a4a4a" stroke-width="1.7"/>
<path d="M37,301.8 L47.5,301.8 L47.5,316.3 L37,316.3 Z" fill="none" stroke="#4a4a4a" stroke-width="1.5"/>
<rect x="38.8" y="304.2" width="6.2" height="1.3" fill="#4a4a4a"/><rect x="38.8" y="307" width="6.2" height="1.3" fill="#4a4a4a"/><rect x="38.8" y="309.8" width="3.5" height="1.3" fill="#4a4a4a"/>
<path d="M50,302.6 L52,304.4 L45.6,313.6 L43.4,314.6 L43.6,312 Z" fill="#4a4a4a" stroke="#fff" stroke-width="0.6"/>
<rect x="36" y="340.9" width="13.5" height="11.5" fill="none" stroke="#4a4a4a" stroke-width="1"/>
<rect x="38.3" y="343.2" width="14.7" height="12.9" fill="#fff" stroke="#4a4a4a" stroke-width="1.2"/>
<path d="M39.5,355 L43.5,348.5 L46,351.5 L48.5,349.5 L52,355 Z" fill="#4a4a4a"/>
<circle cx="49.5" cy="346.5" r="1.3" fill="#4a4a4a"/>
<polygon points="43.60,381.60 45.72,386.89 51.40,387.27 47.02,390.91 48.42,396.43 43.60,393.40 38.78,396.43 40.18,390.91 35.80,387.27 41.48,386.89" fill="#4a4a4a"/>
<path d="M49.5,420.5 C46,421 42.5,423.5 41,427.5 C40.5,429 40.5,430.5 41,431.5 L38,435.3 L38.8,435.5 L41.8,431.8 C43.5,432 45.5,431 47,429 L44.5,429 L47.8,427 L45.5,426.8 L48.8,424.5 L46.8,424.3 C48.5,423 49.5,421.5 49.5,420.5 Z" fill="#4a4a4a"/>
<path d="M39,460.8 L50.5,460.8 L47.8,472 L36,472 Z" fill="#4a4a4a"/>
<path d="M36,472 C35.5,473.5 36,474 37,474 L48,474 L50.8,462.5" fill="none" stroke="#4a4a4a" stroke-width="1.1"/>
<rect x="40.5" y="462.8" width="6.5" height="1.2" fill="#fff" transform="skewX(-14)" transform-origin="43 463"/>
<rect x="40" y="465.2" width="6.5" height="1.2" fill="#fff" transform="skewX(-14)" transform-origin="43 465"/>
<path d="M36,502.2 L43.8,500.1 L51.8,502.2 L43.8,504.3 Z" fill="#4a4a4a"/>
<path d="M36,502.5 L36,504.6 L43.8,506.8 L51.8,504.6 L51.8,502.5" fill="none" stroke="#4a4a4a" stroke-width="1.1"/>
<path d="M36,505 L36,507.2 L43.8,509.4 L51.8,507.2 L51.8,505" fill="none" stroke="#4a4a4a" stroke-width="1.1"/>
<path d="M36,507.6 L36,509.6 L43.8,511.7 L51.8,509.6 L51.8,507.6" fill="none" stroke="#4a4a4a" stroke-width="1.1"/>
<circle cx="24.80" cy="551.00" r="4.80" fill="#8b9aab"/>
<rect x="23.70" y="544.60" width="2.20" height="3.20" fill="#8b9aab" transform="rotate(0.0 24.80 551.00)"/>
<rect x="23.70" y="544.60" width="2.20" height="3.20" fill="#8b9aab" transform="rotate(45.0 24.80 551.00)"/>
<rect x="23.70" y="544.60" width="2.20" height="3.20" fill="#8b9aab" transform="rotate(90.0 24.80 551.00)"/>
<rect x="23.70" y="544.60" width="2.20" height="3.20" fill="#8b9aab" transform="rotate(135.0 24.80 551.00)"/>
<rect x="23.70" y="544.60" width="2.20" height="3.20" fill="#8b9aab" transform="rotate(180.0 24.80 551.00)"/>
<rect x="23.70" y="544.60" width="2.20" height="3.20" fill="#8b9aab" transform="rotate(225.0 24.80 551.00)"/>
<rect x="23.70" y="544.60" width="2.20" height="3.20" fill="#8b9aab" transform="rotate(270.0 24.80 551.00)"/>
<rect x="23.70" y="544.60" width="2.20" height="3.20" fill="#8b9aab" transform="rotate(315.0 24.80 551.00)"/>
<circle cx="24.80" cy="551.00" r="2.10" fill="#fff"/>
<circle cx="33.20" cy="546.40" r="2.70" fill="#8b9aab"/>
<rect x="32.45" y="542.80" width="1.50" height="1.80" fill="#8b9aab" transform="rotate(0.0 33.20 546.40)"/>
<rect x="32.45" y="542.80" width="1.50" height="1.80" fill="#8b9aab" transform="rotate(60.0 33.20 546.40)"/>
<rect x="32.45" y="542.80" width="1.50" height="1.80" fill="#8b9aab" transform="rotate(120.0 33.20 546.40)"/>
<rect x="32.45" y="542.80" width="1.50" height="1.80" fill="#8b9aab" transform="rotate(180.0 33.20 546.40)"/>
<rect x="32.45" y="542.80" width="1.50" height="1.80" fill="#8b9aab" transform="rotate(240.0 33.20 546.40)"/>
<rect x="32.45" y="542.80" width="1.50" height="1.80" fill="#8b9aab" transform="rotate(300.0 33.20 546.40)"/>
<circle cx="33.20" cy="546.40" r="1.00" fill="#fff"/>
<circle cx="33.20" cy="555.60" r="2.70" fill="#8b9aab"/>
<rect x="32.45" y="552.00" width="1.50" height="1.80" fill="#8b9aab" transform="rotate(0.0 33.20 555.60)"/>
<rect x="32.45" y="552.00" width="1.50" height="1.80" fill="#8b9aab" transform="rotate(60.0 33.20 555.60)"/>
<rect x="32.45" y="552.00" width="1.50" height="1.80" fill="#8b9aab" transform="rotate(120.0 33.20 555.60)"/>
<rect x="32.45" y="552.00" width="1.50" height="1.80" fill="#8b9aab" transform="rotate(180.0 33.20 555.60)"/>
<rect x="32.45" y="552.00" width="1.50" height="1.80" fill="#8b9aab" transform="rotate(240.0 33.20 555.60)"/>
<rect x="32.45" y="552.00" width="1.50" height="1.80" fill="#8b9aab" transform="rotate(300.0 33.20 555.60)"/>
<circle cx="33.20" cy="555.60" r="1.00" fill="#fff"/>
<path d="M22.4,717.6 L22.4,706 L26.2,706 C28.5,706 29.6,707.2 29.6,708.9 C29.6,710.6 28.5,711.9 26.2,711.9 L19,711.9 M19,715 L28,715" fill="none" stroke="#8b9aab" stroke-width="2.1"/>
<path d="M19.4,787.4 L19.4,799.4 L37,799.4" fill="none" stroke="#8b9aab" stroke-width="1.2"/>
<rect x="22.0" y="794.1" width="1.8" height="4.5" fill="#8b9aab"/>
<rect x="25.0" y="791.1" width="1.8" height="7.5" fill="#8b9aab"/>
<rect x="28.0" y="792.6" width="1.8" height="6.0" fill="#8b9aab"/>
<rect x="31.0" y="789.1" width="1.8" height="9.5" fill="#8b9aab"/>
<path d="M510.4,14.9 C514,9 518.5,7.2 523.5,7.2 C528.5,7.2 533,9 536.6,14.9 C533,20.8 528.5,22.6 523.5,22.6 C518.5,22.6 514,20.8 510.4,14.9 Z" fill="none" stroke="#fff" stroke-width="2.6"/>
<circle cx="523.9" cy="13.8" r="6.9" fill="#fff"/>
<path d="M519.3,13.2 C519.3,10.8 520.8,9.2 523,8.6" fill="none" stroke="#5d9be8" stroke-width="1.1"/>
<rect x="746.5" y="3" width="7.2" height="21.1" fill="#fff"/>
<rect x="755.1" y="3" width="7.5" height="21.1" fill="#fff"/>
<path d="M762.8,7.8 L768.2,4.2 L776.9,21.3 L771,24.6 Z" fill="#fff"/>
<rect x="748.2" y="7" width="3.6" height="1.1" fill="#38bb9b"/><rect x="756.9" y="7" width="3.6" height="1.1" fill="#38bb9b"/>
<path d="M1007.5,9.6 C1014.5,8.8 1019.6,12 1019.6,16.4 C1019.6,19 1018,21 1016,22.4 L1017.6,25.7 L1012.5,23.3 C1011,23.7 1009.5,23.9 1007.8,23.9 C1004.5,23.9 1001.6,22.9 999.6,21.3 C1006,21 1012,17.5 1012.8,12.5 C1011.5,11 1009.8,10 1007.5,9.6 Z" fill="#fff"/>
<ellipse cx="1002.1" cy="12.2" rx="11.3" ry="8.3" fill="#fff" stroke="#7266bb" stroke-width="1.6"/>
<ellipse cx="1002.1" cy="12.2" rx="11.0" ry="8.0" fill="#fff"/>
<path d="M995.5,18.5 L992.8,21.8 L999.5,19.8 Z" fill="#fff"/>
<path d="M1245.5,26 L1233.6,14.2 C1230.6,11.2 1230.6,6.2 1233.6,3.6 C1236.6,1 1241.4,1.2 1245.5,5.6 C1249.6,1.2 1254.4,1 1257.4,3.6 C1260.4,6.2 1260.4,11.2 1257.4,14.2 Z" fill="#fff"/>
</svg>
<div id="topline"></div>
<div style="position:absolute;left:0;top:1px;width:1282px;height:7px;background:linear-gradient(rgba(0,0,0,.09),rgba(0,0,0,0));z-index:9"></div>
</body></html>
